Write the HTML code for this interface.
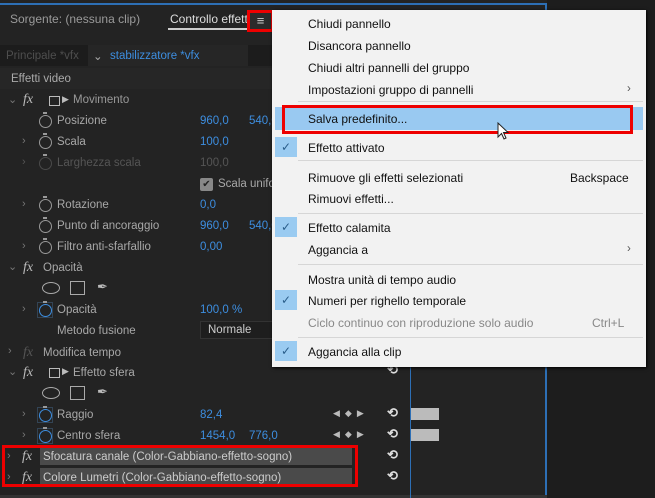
<!DOCTYPE html>
<html><head><meta charset="utf-8"><style>
*{margin:0;padding:0;box-sizing:border-box}
body{width:655px;height:498px;overflow:hidden;background:#1d1d1d;font-family:"Liberation Sans",sans-serif;font-size:11.5px;position:relative;color:#a8a8a8}
.a{position:absolute;white-space:nowrap}
.b{color:#3d8ee0}
.m{position:absolute;left:308px;color:#111;font-size:12px;white-space:nowrap}
.ck{position:absolute;left:275px;width:22px;height:20px;background:#9acbf1;color:#2a5d8a;text-align:center;font-size:12px;line-height:20px}
.sep{position:absolute;left:298px;width:345px;height:1px;background:#d6d6d6}
.sw{position:absolute;width:13px;height:13px;border:1.6px solid #999;border-radius:50%}
.sw:before{content:"";position:absolute;left:3px;top:-4px;width:4px;height:2px;background:#999}
.fx{font-style:italic;font-family:"Liberation Serif",serif;font-size:14px;color:#bbb}
.chev{color:#777;font-size:11px}
.rs{position:absolute;left:387px;color:#ddd;font-size:13px;font-weight:bold}
</style></head><body>
<div class="a" style="left:0;top:0;width:547px;height:498px;background:#232323"></div>
<div class="a" style="left:0;top:3px;width:547px;height:2px;background:#2d6fb5"></div>
<div class="a" style="left:545px;top:3px;width:2px;height:495px;background:#2d6fb5"></div>
<div class="a" style="left:0;top:495px;width:547px;height:3px;background:#333"></div>
<div class="a" style="left:10px;top:12px;font-size:12px;color:#9a9a9a">Sorgente: (nessuna clip)</div>
<div class="a" style="left:170px;top:12px;font-size:12px;color:#ddd">Controllo effetti</div>
<div class="a" style="left:168px;top:28px;width:84px;height:2px;background:#ccc"></div>
<div class="a" style="left:247px;top:10px;width:27px;height:22px;border:3px solid #e00;background:#2b2b2b;color:#ccc;text-align:center;line-height:15px;font-size:13px">≡</div>
<div class="a" style="left:0;top:45px;width:546px;height:21px;background:#1c1c1c"></div>
<div class="a" style="left:6px;top:50px;color:#4e4e4e">Principale *vfx</div>
<div class="a" style="left:88px;top:45px;width:160px;height:21px;background:#262626"></div>
<div class="a" style="left:93px;top:49px;color:#aaa">⌄</div>
<div class="a b" style="left:110px;top:50px">stabilizzatore *vfx</div>
<div class="a" style="left:0;top:68px;width:546px;height:21px;background:#262626"></div>
<div class="a" style="left:11px;top:73px;color:#aaa">Effetti video</div>

<div class="a chev" style="left:8px;top:93px">⌄</div><div class="a fx" style="left:23px;top:92px">fx</div>
<div class="a" style="left:49px;top:96px;width:11px;height:10px;border:1px solid #bbb"></div><div class="a" style="left:62px;top:94px;font-size:9px;color:#bbb">▶</div>
<div class="a" style="left:73px;top:94px;color:#999">Movimento</div>

<div class="sw" style="left:39px;top:115px"></div><div class="a" style="left:57px;top:115px">Posizione</div><div class="a b" style="left:200px;top:115px">960,0</div><div class="a b" style="left:249px;top:115px">540,0</div>
<div class="a chev" style="left:22px;top:135px">›</div><div class="sw" style="left:39px;top:136px"></div><div class="a" style="left:57px;top:136px">Scala</div><div class="a b" style="left:200px;top:136px">100,0</div>
<div class="a chev" style="left:22px;top:156px;color:#555">›</div><div class="sw" style="left:39px;top:157px;border-color:#4a4a4a"></div><div class="a" style="left:57px;top:157px;color:#555">Larghezza scala</div><div class="a" style="left:200px;top:157px;color:#555">100,0</div>
<div class="a" style="left:200px;top:178px;width:13px;height:13px;background:#888;border-radius:2px;color:#222;font-size:10px;text-align:center;line-height:13px">✔</div><div class="a" style="left:218px;top:178px">Scala uniforme</div>
<div class="a chev" style="left:22px;top:198px">›</div><div class="sw" style="left:39px;top:199px"></div><div class="a" style="left:57px;top:199px">Rotazione</div><div class="a b" style="left:200px;top:199px">0,0</div>
<div class="sw" style="left:39px;top:220px"></div><div class="a" style="left:57px;top:220px">Punto di ancoraggio</div><div class="a b" style="left:200px;top:220px">960,0</div><div class="a b" style="left:249px;top:220px">540,0</div>
<div class="a chev" style="left:22px;top:240px">›</div><div class="sw" style="left:39px;top:241px"></div><div class="a" style="left:57px;top:241px">Filtro anti-sfarfallio</div><div class="a b" style="left:200px;top:241px">0,00</div>

<div class="a chev" style="left:8px;top:260px">⌄</div><div class="a fx" style="left:23px;top:260px">fx</div><div class="a" style="left:43px;top:262px">Opacità</div>
<div class="a" style="left:42px;top:282px;width:18px;height:12px;border:1px solid #aaa;border-radius:50%"></div><div class="a" style="left:70px;top:281px;width:15px;height:14px;border:1px solid #aaa"></div><div class="a" style="left:97px;top:279px;color:#bbb;font-size:13px">✒</div>
<div class="a chev" style="left:22px;top:303px">›</div><div class="a" style="left:37px;top:302px;width:16px;height:16px;border:1px solid #345"></div><div class="sw" style="left:39px;top:304px;border-color:#3d8ee0"></div><div class="a" style="left:57px;top:304px">Opacità</div><div class="a b" style="left:200px;top:304px">100,0 %</div>
<div class="a" style="left:57px;top:325px">Metodo fusione</div><div class="a" style="left:200px;top:321px;width:80px;height:18px;border:1px solid #333;background:#1e1e1e"></div><div class="a" style="left:208px;top:324px;color:#ccc">Normale</div>
<div class="a chev" style="left:8px;top:345px">›</div><div class="a fx" style="left:23px;top:345px;color:#555">fx</div><div class="a" style="left:43px;top:347px">Modifica tempo</div>
<div class="a chev" style="left:8px;top:365px">⌄</div><div class="a fx" style="left:23px;top:365px">fx</div>
<div class="a" style="left:49px;top:368px;width:11px;height:10px;border:1px solid #bbb"></div><div class="a" style="left:62px;top:366px;font-size:9px;color:#bbb">▶</div><div class="a" style="left:73px;top:367px">Effetto sfera</div>
<div class="rs" style="top:362px">⟲</div>
<div class="a" style="left:42px;top:387px;width:18px;height:12px;border:1px solid #aaa;border-radius:50%"></div><div class="a" style="left:70px;top:386px;width:15px;height:14px;border:1px solid #aaa"></div><div class="a" style="left:97px;top:384px;color:#bbb;font-size:13px">✒</div>
<div class="a chev" style="left:22px;top:408px">›</div><div class="a" style="left:37px;top:407px;width:16px;height:16px;border:1px solid #345"></div><div class="sw" style="left:39px;top:409px;border-color:#3d8ee0"></div><div class="a" style="left:57px;top:409px">Raggio</div><div class="a b" style="left:200px;top:409px">82,4</div>
<div class="a chev" style="left:22px;top:429px">›</div><div class="a" style="left:37px;top:428px;width:16px;height:16px;border:1px solid #345"></div><div class="sw" style="left:39px;top:430px;border-color:#3d8ee0"></div><div class="a" style="left:57px;top:430px">Centro sfera</div><div class="a b" style="left:200px;top:430px">1454,0</div><div class="a b" style="left:249px;top:430px">776,0</div>
<div class="a" style="left:333px;top:408px;color:#bbb;font-size:9px;letter-spacing:5px">◀◆▶</div><div class="rs" style="top:405px">⟲</div>
<div class="a" style="left:333px;top:429px;color:#bbb;font-size:9px;letter-spacing:5px">◀◆▶</div><div class="rs" style="top:426px">⟲</div>
<div class="a" style="left:411px;top:408px;width:28px;height:12px;background:#bbb"></div>
<div class="a" style="left:411px;top:429px;width:28px;height:12px;background:#bbb"></div>
<div class="a" style="left:40px;top:447px;width:312px;height:18px;background:#4a4a4a"></div>
<div class="a" style="left:40px;top:468px;width:312px;height:18px;background:#4a4a4a"></div>
<div class="a chev" style="left:7px;top:450px">›</div><div class="a fx" style="left:22px;top:449px">fx</div><div class="a" style="left:43px;top:451px;color:#ccc">Sfocatura canale (Color-Gabbiano-effetto-sogno)</div>
<div class="a chev" style="left:7px;top:471px">›</div><div class="a fx" style="left:22px;top:470px">fx</div><div class="a" style="left:43px;top:472px;color:#ccc">Colore Lumetri (Color-Gabbiano-effetto-sogno)</div>
<div class="rs" style="top:447px">⟲</div><div class="rs" style="top:468px">⟲</div>
<div class="a" style="left:2px;top:445px;width:356px;height:42px;border:3px solid #e00"></div>
<div class="a" style="left:410px;top:366px;width:1px;height:132px;background:#2d6fb5"></div>

<div class="a" style="left:272px;top:10px;width:374px;height:357px;background:#f2f2f2;box-shadow:1px 1px 3px #000"></div>
<div class="m" style="top:17px">Chiudi pannello</div>
<div class="m" style="top:39px">Disancora pannello</div>
<div class="m" style="top:61px">Chiudi altri pannelli del gruppo</div>
<div class="m" style="top:83px">Impostazioni gruppo di pannelli</div><div class="a" style="left:627px;top:83px;color:#555">›</div>
<div class="sep" style="top:101px"></div>
<div class="a" style="left:275px;top:107px;width:368px;height:23px;background:#99c9f1"></div>
<div class="m" style="top:112px">Salva predefinito...</div>
<div class="a" style="left:282px;top:105px;width:351px;height:29px;border:3px solid #e00"></div>
<svg class="a" style="left:497px;top:122px" width="14" height="20" viewBox="0 0 14 20"><path d="M1 1 L1 15 L4.5 11.5 L7 17 L9 16 L6.5 10.5 L11 10.5 Z" fill="#fff" stroke="#222" stroke-width="1"/></svg>
<div class="ck" style="top:137px">✓</div><div class="m" style="top:141px">Effetto attivato</div>
<div class="sep" style="top:160px"></div>
<div class="m" style="top:171px">Rimuove gli effetti selezionati</div><div class="m" style="left:570px;top:171px">Backspace</div>
<div class="m" style="top:192px">Rimuovi effetti...</div>
<div class="sep" style="top:213px"></div>
<div class="ck" style="top:217px">✓</div><div class="m" style="top:221px">Effetto calamita</div>
<div class="m" style="top:243px">Aggancia a</div><div class="a" style="left:627px;top:243px;color:#555">›</div>
<div class="sep" style="top:264px"></div>
<div class="m" style="top:273px">Mostra unità di tempo audio</div>
<div class="ck" style="top:290px">✓</div><div class="m" style="top:294px">Numeri per righello temporale</div>
<div class="m" style="top:316px;color:#888">Ciclo continuo con riproduzione solo audio</div><div class="m" style="left:592px;top:316px;color:#888">Ctrl+L</div>
<div class="sep" style="top:337px"></div>
<div class="ck" style="top:341px">✓</div><div class="m" style="top:345px">Aggancia alla clip</div>
</body></html>
